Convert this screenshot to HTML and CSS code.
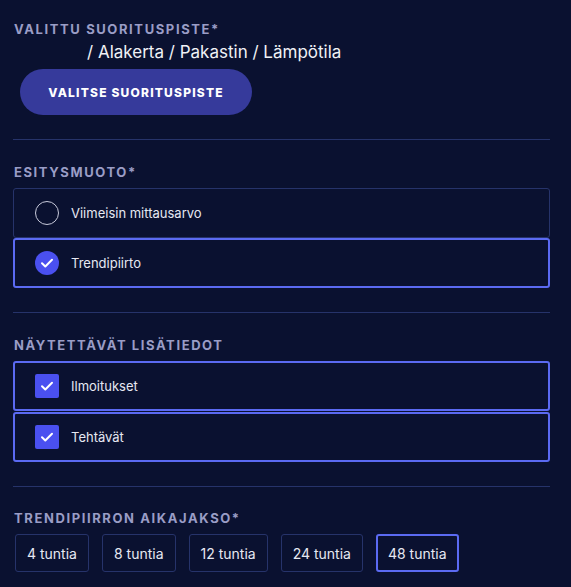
FILE: index.html
```html
<!DOCTYPE html>
<html lang="fi">
<head>
    <meta charset="UTF-8">
    <meta name="viewport" content="width=device-width, initial-scale=1.0">
    <title>Asetukset</title>
    <link rel="stylesheet" href="styles.css">
</head>
<body>
    <div class="settings">
        <section class="block block-first">
            <div class="field-label">Valittu suorituspiste*</div>
            <div class="path">/ Alakerta / Pakastin / Lämpötila</div>
            <button class="pick-btn">Valitse suorituspiste</button>
        </section>

        <section class="block">
            <div class="field-label">Esitysmuoto*</div>
            <div class="options radio-group">
                <div class="option">
                    <span class="radio"></span>
                    <span class="option-text">Viimeisin mittausarvo</span>
                </div>
                <div class="option selected">
                    <span class="radio checked">
                        <svg viewBox="0 0 24 24" width="24" height="24"><path d="M7 12.3l3.3 3.2L17 8.8" fill="none" stroke="#fff" stroke-width="2" stroke-linecap="round" stroke-linejoin="round"/></svg>
                    </span>
                    <span class="option-text">Trendipiirto</span>
                </div>
            </div>
        </section>

        <section class="block">
            <div class="field-label">Näytettävät lisätiedot</div>
            <div class="options check-group">
                <div class="option selected">
                    <span class="checkbox">
                        <svg viewBox="0 0 24 24" width="24" height="24"><path d="M7 12.3l3.3 3.2L17 8.8" fill="none" stroke="#fff" stroke-width="2" stroke-linecap="round" stroke-linejoin="round"/></svg>
                    </span>
                    <span class="option-text">Ilmoitukset</span>
                </div>
                <div class="option selected">
                    <span class="checkbox">
                        <svg viewBox="0 0 24 24" width="24" height="24"><path d="M7 12.3l3.3 3.2L17 8.8" fill="none" stroke="#fff" stroke-width="2" stroke-linecap="round" stroke-linejoin="round"/></svg>
                    </span>
                    <span class="option-text">Tehtävät</span>
                </div>
            </div>
        </section>

        <section class="block block-last">
            <div class="field-label">Trendipiirron aikajakso*</div>
            <div class="periods">
                <button class="period">4 tuntia</button>
                <button class="period">8 tuntia</button>
                <button class="period">12 tuntia</button>
                <button class="period">24 tuntia</button>
                <button class="period active">48 tuntia</button>
            </div>
        </section>
    </div>
</body>
</html>
```

FILE: styles.css
```css
body {
    margin: 0;
    background-color: #0a1130;
    font-family: Inter, "DejaVu Sans", sans-serif;
    color: #e6e8f2;
}

.settings {
    width: 537px;
    padding: 0 13px;
}

.block {
    padding: 24px 0 24px;
    border-bottom: 1px solid #26336a;
}

.block-first {
    padding-top: 21px;
}

.block-last {
    padding-top: 23px;
    border-bottom: none;
}

.field-label {
    margin-left: 1px;
    font-size: 13px;
    line-height: 16px;
    font-weight: 700;
    letter-spacing: 1.6px;
    text-transform: uppercase;
    color: #9a9dc6;
}

.path {
    margin: 5px 0 0 74px;
    font-size: 17px;
    line-height: 20px;
    color: #f0f1f6;
}

.pick-btn {
    margin: 7px 0 0 7px;
    width: 232px;
    height: 46px;
    border: none;
    border-radius: 23px;
    background-color: #363a9b;
    color: #fff;
    font-family: inherit;
    font-size: 12px;
    font-weight: 800;
    letter-spacing: 1.2px;
    text-transform: uppercase;
    cursor: pointer;
}

.options {
    margin-top: 8px;
}

.option {
    position: relative;
    display: flex;
    align-items: center;
    gap: 12px;
    height: 50px;
    box-sizing: border-box;
    padding: 0 21px;
    border: 1px solid #26336a;
    border-radius: 3px;
}

.option.selected {
    padding: 0 20px;
    border: 2px solid #5b6af2;
    z-index: 1;
}

.check-group .option + .option {
    margin-top: 1px;
}

.radio,
.checkbox {
    flex: none;
    width: 24px;
    height: 24px;
    box-sizing: border-box;
}

.radio {
    border: 1px solid #c8cadb;
    border-radius: 50%;
}

.radio.checked {
    border: none;
    background-color: #4a50f0;
}

.checkbox {
    border-radius: 2px;
    background-color: #4a50f0;
}

.radio svg,
.checkbox svg {
    display: block;
}

.option-text {
    font-size: 13px;
}

.periods {
    display: flex;
    gap: 13px;
    margin: 8px 0 0 2px;
}

.period {
    height: 38px;
    padding: 0 11px;
    border: 1px solid #26336a;
    border-radius: 3px;
    background: transparent;
    color: #e6e8f2;
    font-family: inherit;
    font-size: 14px;
    cursor: pointer;
}

.period.active {
    padding: 0 10px;
    border: 2px solid #5b6af2;
}
```
